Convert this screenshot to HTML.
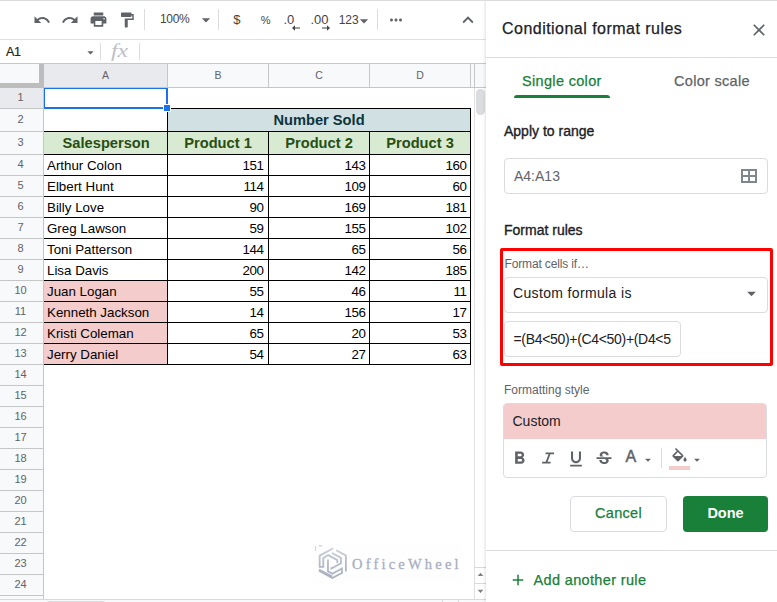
<!DOCTYPE html>
<html><head><meta charset="utf-8">
<style>
*{box-sizing:border-box;margin:0;padding:0}
html,body{width:777px;height:602px;overflow:hidden;background:#fff}
body{position:relative;font-family:"Liberation Sans",sans-serif;color:#000}
.abs{position:absolute}
svg{position:absolute;overflow:visible}
/* toolbar */
#topline{left:0;top:0;width:777px;height:1px;background:#dadce0;z-index:5}
#tbline{left:0;top:39px;width:486px;height:1px;background:#e0e0e0}
.tsep{top:9px;width:1px;height:21px;background:#dadce0}
.tt{color:#444;font-size:12px;line-height:14px;white-space:nowrap}
/* formula bar */
#fbline{left:0;top:63px;width:486px;height:1px;background:#c8c8c8}
/* grid headers */
.ch{top:64px;height:23px;background:#f8f9fa;border-right:1px solid #c4c7c5;color:#5f6368;font-size:10.5px;line-height:23px;text-align:center}
.rh{left:0;width:44px;background:#f8f9fa;border-right:1px solid #c4c7c5;border-bottom:1px solid #c4c7c5;color:#5f6368;font-size:11px;text-align:center;padding-right:2px}
.cell{font-size:13.333px;white-space:nowrap;color:#000;height:20px;line-height:20px}
.num{text-align:right;letter-spacing:-.4px}
.hd{font-weight:bold;font-size:14.667px;text-align:center;color:#274e13}
.ln{background:#000}
/* panel */
#panel{left:486px;top:0;width:291px;height:602px;background:#fff}
.box{border:1px solid #dadce0;border-radius:4px;background:#fff}
.pt{white-space:nowrap}
.pb{white-space:nowrap;color:#202124;-webkit-text-stroke:.35px #202124}
#panel{box-shadow:-1px 0 3px rgba(0,0,0,.12)}
</style></head><body>


<div class="abs" id="topline"></div><div class="abs" id="tbline"></div><div class="abs" id="fbline"></div>
<svg style="left:32.5px;top:10.7px" width="18" height="18" viewBox="0 0 24 24"><path fill="#5f6368" d="M12.5 8c-2.65 0-5.05.99-6.9 2.6L2 7v9h9l-3.62-3.62c1.39-1.16 3.16-1.88 5.12-1.88 3.54 0 6.55 2.31 7.6 5.5l2.37-.78C21.08 11.03 17.15 8 12.5 8z"/></svg>
<svg style="left:61.0px;top:10.7px" width="18" height="18" viewBox="0 0 24 24"><path fill="#5f6368" d="M18.4 10.6C16.55 8.99 14.15 8 11.5 8c-4.65 0-8.58 3.03-9.96 7.22L3.9 16c1.05-3.19 4.05-5.5 7.6-5.5 1.95 0 3.73.72 5.12 1.88L13 16h9V7l-3.6 3.6z"/></svg>
<svg style="left:88.5px;top:10.0px" width="19" height="19" viewBox="0 0 24 24"><path fill="#5f6368" d="M19 8H5c-1.66 0-3 1.34-3 3v6h4v4h12v-4h4v-6c0-1.66-1.34-3-3-3zm-3 11H8v-5h8v5zm3-7c-.55 0-1-.45-1-1s.45-1 1-1 1 .45 1 1-.45 1-1 1zm-1-9H6v4h12V3z"/></svg>
<svg style="left:118.0px;top:11.0px" width="18" height="18" viewBox="0 0 24 24"><path fill="#5f6368" d="M18 4V3c0-.55-.45-1-1-1H5c-.55 0-1 .45-1 1v4c0 .55.45 1 1 1h12c.55 0 1-.45 1-1V6h1v4H9v11c0 .55.45 1 1 1h2c.55 0 1-.45 1-1v-9h8V4h-3z"/></svg>
<div class="abs tsep" style="left:144px"></div>
<div class="abs tt" style="left:160px;top:12px;letter-spacing:-.3px">100%</div>
<svg style="left:195.7px;top:10.0px" width="20" height="20" viewBox="0 0 24 24"><path fill="#5f6368" d="M7 10l5 5 5-5z"/></svg>
<div class="abs tsep" style="left:218px"></div>
<div class="abs tt" style="left:233.3px;top:13px;font-size:13px">$</div>
<div class="abs tt" style="left:260.7px;top:13px;font-size:11px">%</div>
<div class="abs tt" style="left:283.5px;top:13px;font-size:13px">.0</div>
<svg style="left:292px;top:25px" width="8" height="6" viewBox="0 0 8 6"><path d="M0 3L3 0.3V5.7zM2 2.4H8V3.6H2z" fill="#444"/></svg>
<div class="abs tt" style="left:310.5px;top:13px;font-size:13px">.00</div>
<svg style="left:322px;top:25px" width="8" height="6" viewBox="0 0 8 6"><path d="M8 3L5 0.3V5.7zM6 2.4H0V3.6H6z" fill="#444"/></svg>
<div class="abs tt" style="left:338.7px;top:13px;font-size:12px">123</div>
<svg style="left:354.0px;top:10.5px" width="20" height="20" viewBox="0 0 24 24"><path fill="#5f6368" d="M7 10l5 5 5-5z"/></svg>
<div class="abs tsep" style="left:377px"></div>
<svg style="left:387.0px;top:11.0px" width="18" height="18" viewBox="0 0 24 24"><path fill="#5f6368" d="M6 10c-1.1 0-2 .9-2 2s.9 2 2 2 2-.9 2-2-.9-2-2-2zm12 0c-1.1 0-2 .9-2 2s.9 2 2 2 2-.9 2-2-.9-2-2-2zm-6 0c-1.1 0-2 .9-2 2s.9 2 2 2 2-.9 2-2-.9-2-2-2z"/></svg>
<svg style="left:457.0px;top:8.5px" width="22" height="22" viewBox="0 0 24 24"><path fill="#5f6368" d="M12 8l-6 6 1.41 1.41L12 10.83l4.59 4.58L18 14z"/></svg>
<div class="abs" style="left:6px;top:45px;font-size:12.5px;line-height:15px;color:#222;letter-spacing:-.4px;-webkit-text-stroke:.2px #222">A1</div>
<svg style="left:83.2px;top:44.5px" width="15" height="15" viewBox="0 0 24 24"><path fill="#5f6368" d="M7 10l5 5 5-5z"/></svg>
<div class="abs" style="left:100px;top:43px;width:1px;height:17px;background:#dadce0"></div>
<div class="abs" style="left:111px;top:40px;font-family:'Liberation Serif',serif;font-style:italic;font-size:19px;line-height:22px;color:#bdc1c6;transform:scaleX(1.25);transform-origin:0 0">fx</div>
<div class="abs" style="left:139px;top:43px;width:1px;height:17px;background:#dadce0"></div>
<div class="abs" style="left:0;top:64px;width:486px;height:24px;background:#f8f9fa;border-bottom:1px solid #c4c7c5"></div>
<div class="abs" style="left:44px;top:64px;width:123px;height:23px;background:#e8eaed"></div>
<div class="abs ch" style="left:44px;width:124px;background:#e8eaed">A</div>
<div class="abs ch" style="left:168px;width:101px">B</div>
<div class="abs ch" style="left:269px;width:101px">C</div>
<div class="abs ch" style="left:370px;width:101px">D</div>
<div class="abs" style="left:474px;top:64px;width:1px;height:23px;background:#c4c7c5"></div>
<div class="abs" style="left:0;top:64px;width:44px;height:24px;background:#f8f9fa"></div>
<div class="abs" style="left:39px;top:64px;width:5px;height:24px;background:#bdbdbd"></div>
<div class="abs" style="left:0;top:83px;width:44px;height:5px;background:#bdbdbd"></div>
<div class="abs rh" style="top:88px;height:21px;line-height:18px;background:#e8eaed">1</div>
<div class="abs rh" style="top:109px;height:23px;line-height:20px;background:#f8f9fa">2</div>
<div class="abs rh" style="top:132px;height:23px;line-height:20px;background:#f8f9fa">3</div>
<div class="abs rh" style="top:155px;height:21px;line-height:18px;background:#f8f9fa">4</div>
<div class="abs rh" style="top:176px;height:21px;line-height:18px;background:#f8f9fa">5</div>
<div class="abs rh" style="top:197px;height:21px;line-height:18px;background:#f8f9fa">6</div>
<div class="abs rh" style="top:218px;height:21px;line-height:18px;background:#f8f9fa">7</div>
<div class="abs rh" style="top:239px;height:21px;line-height:18px;background:#f8f9fa">8</div>
<div class="abs rh" style="top:260px;height:21px;line-height:18px;background:#f8f9fa">9</div>
<div class="abs rh" style="top:281px;height:21px;line-height:18px;background:#f8f9fa">10</div>
<div class="abs rh" style="top:302px;height:21px;line-height:18px;background:#f8f9fa">11</div>
<div class="abs rh" style="top:323px;height:21px;line-height:18px;background:#f8f9fa">12</div>
<div class="abs rh" style="top:344px;height:21px;line-height:18px;background:#f8f9fa">13</div>
<div class="abs rh" style="top:365px;height:21px;line-height:18px;background:#f8f9fa">14</div>
<div class="abs rh" style="top:386px;height:21px;line-height:18px;background:#f8f9fa">15</div>
<div class="abs rh" style="top:407px;height:21px;line-height:18px;background:#f8f9fa">16</div>
<div class="abs rh" style="top:428px;height:21px;line-height:18px;background:#f8f9fa">17</div>
<div class="abs rh" style="top:449px;height:21px;line-height:18px;background:#f8f9fa">18</div>
<div class="abs rh" style="top:470px;height:21px;line-height:18px;background:#f8f9fa">19</div>
<div class="abs rh" style="top:491px;height:21px;line-height:18px;background:#f8f9fa">20</div>
<div class="abs rh" style="top:512px;height:21px;line-height:18px;background:#f8f9fa">21</div>
<div class="abs rh" style="top:533px;height:21px;line-height:18px;background:#f8f9fa">22</div>
<div class="abs rh" style="top:554px;height:21px;line-height:18px;background:#f8f9fa">23</div>
<div class="abs rh" style="top:575px;height:21px;line-height:18px;background:#f8f9fa">24</div>
<div class="abs rh" style="top:596px;height:21px;line-height:18px;background:#f8f9fa">25</div>
<div class="abs" style="left:168px;top:109px;width:302px;height:22px;background:#d0e0e3"></div>
<div class="abs" style="left:44px;top:132px;width:426px;height:22px;background:#d9ead3"></div>
<div class="abs" style="left:44px;top:281px;width:123px;height:83px;background:#f4cccc"></div>
<div class="abs ln" style="left:167px;top:108px;width:304px;height:1px"></div>
<div class="abs ln" style="left:44px;top:131px;width:427px;height:1px"></div>
<div class="abs ln" style="left:44px;top:154px;width:427px;height:1px"></div>
<div class="abs ln" style="left:44px;top:175px;width:427px;height:1px"></div>
<div class="abs ln" style="left:44px;top:196px;width:427px;height:1px"></div>
<div class="abs ln" style="left:44px;top:217px;width:427px;height:1px"></div>
<div class="abs ln" style="left:44px;top:238px;width:427px;height:1px"></div>
<div class="abs ln" style="left:44px;top:259px;width:427px;height:1px"></div>
<div class="abs ln" style="left:44px;top:280px;width:427px;height:1px"></div>
<div class="abs ln" style="left:44px;top:301px;width:427px;height:1px"></div>
<div class="abs ln" style="left:44px;top:322px;width:427px;height:1px"></div>
<div class="abs ln" style="left:44px;top:343px;width:427px;height:1px"></div>
<div class="abs ln" style="left:44px;top:364px;width:427px;height:1px"></div>
<div class="abs ln" style="left:167px;top:108px;width:1px;height:257px"></div>
<div class="abs ln" style="left:470px;top:108px;width:1px;height:257px"></div>
<div class="abs ln" style="left:268px;top:131px;width:1px;height:234px"></div>
<div class="abs ln" style="left:369px;top:131px;width:1px;height:234px"></div>
<div class="abs cell hd" style="left:168px;top:109px;width:302px;height:22px;line-height:22px;color:#0c343d">Number Sold</div>
<div class="abs cell hd" style="left:44.7px;top:132px;width:123px;height:22px;line-height:22px">Salesperson</div>
<div class="abs cell hd" style="left:168px;top:132px;width:100px;height:22px;line-height:22px">Product 1</div>
<div class="abs cell hd" style="left:269px;top:132px;width:100px;height:22px;line-height:22px">Product 2</div>
<div class="abs cell hd" style="left:370px;top:132px;width:100px;height:22px;line-height:22px">Product 3</div>
<div class="abs cell" style="left:47px;top:156px">Arthur Colon</div>
<div class="abs cell num" style="left:168px;top:156px;width:95.6px">151</div>
<div class="abs cell num" style="left:269px;top:156px;width:96.5px">143</div>
<div class="abs cell num" style="left:370px;top:156px;width:96.5px">160</div>
<div class="abs cell" style="left:47px;top:177px">Elbert Hunt</div>
<div class="abs cell num" style="left:168px;top:177px;width:95.6px">114</div>
<div class="abs cell num" style="left:269px;top:177px;width:96.5px">109</div>
<div class="abs cell num" style="left:370px;top:177px;width:96.5px">60</div>
<div class="abs cell" style="left:47px;top:198px">Billy Love</div>
<div class="abs cell num" style="left:168px;top:198px;width:95.6px">90</div>
<div class="abs cell num" style="left:269px;top:198px;width:96.5px">169</div>
<div class="abs cell num" style="left:370px;top:198px;width:96.5px">181</div>
<div class="abs cell" style="left:47px;top:219px">Greg Lawson</div>
<div class="abs cell num" style="left:168px;top:219px;width:95.6px">59</div>
<div class="abs cell num" style="left:269px;top:219px;width:96.5px">155</div>
<div class="abs cell num" style="left:370px;top:219px;width:96.5px">102</div>
<div class="abs cell" style="left:47px;top:240px">Toni Patterson</div>
<div class="abs cell num" style="left:168px;top:240px;width:95.6px">144</div>
<div class="abs cell num" style="left:269px;top:240px;width:96.5px">65</div>
<div class="abs cell num" style="left:370px;top:240px;width:96.5px">56</div>
<div class="abs cell" style="left:47px;top:261px">Lisa Davis</div>
<div class="abs cell num" style="left:168px;top:261px;width:95.6px">200</div>
<div class="abs cell num" style="left:269px;top:261px;width:96.5px">142</div>
<div class="abs cell num" style="left:370px;top:261px;width:96.5px">185</div>
<div class="abs cell" style="left:47px;top:282px">Juan Logan</div>
<div class="abs cell num" style="left:168px;top:282px;width:95.6px">55</div>
<div class="abs cell num" style="left:269px;top:282px;width:96.5px">46</div>
<div class="abs cell num" style="left:370px;top:282px;width:96.5px">11</div>
<div class="abs cell" style="left:47px;top:303px">Kenneth Jackson</div>
<div class="abs cell num" style="left:168px;top:303px;width:95.6px">14</div>
<div class="abs cell num" style="left:269px;top:303px;width:96.5px">156</div>
<div class="abs cell num" style="left:370px;top:303px;width:96.5px">17</div>
<div class="abs cell" style="left:47px;top:324px">Kristi Coleman</div>
<div class="abs cell num" style="left:168px;top:324px;width:95.6px">65</div>
<div class="abs cell num" style="left:269px;top:324px;width:96.5px">20</div>
<div class="abs cell num" style="left:370px;top:324px;width:96.5px">53</div>
<div class="abs cell" style="left:47px;top:345px">Jerry Daniel</div>
<div class="abs cell num" style="left:168px;top:345px;width:95.6px">54</div>
<div class="abs cell num" style="left:269px;top:345px;width:96.5px">27</div>
<div class="abs cell num" style="left:370px;top:345px;width:96.5px">63</div>
<div class="abs" style="left:44px;top:88px;width:124px;height:21px;border:solid #1a73e8;border-width:1px 2px 2px 1px"></div>
<div class="abs" style="left:163px;top:104px;width:8px;height:8px;background:#1a73e8;border:1px solid #fff"></div>
<svg style="left:0;top:0" width="777" height="602" viewBox="0 0 777 602"><defs><linearGradient id="wg" gradientUnits="userSpaceOnUse" x1="0" y1="547" x2="0" y2="579"><stop offset="0" stop-color="#cdd1da"/><stop offset=".45" stop-color="#b6bcc9"/><stop offset="1" stop-color="#a9afbf"/></linearGradient></defs>
<rect x="313" y="544" width="149" height="38" fill="#fefefe"/>
<polyline points="333.27,548.32 319.65,555.62 319.65,566.92 323.30,566.92 323.30,557.95 328.29,555.09 337.26,559.94 337.26,562.93" fill="none" stroke="url(#wg)" stroke-width="1.8" stroke-linejoin="miter"/>
<polyline points="336.26,550.31 345.89,555.49 345.89,571.57" fill="none" stroke="url(#wg)" stroke-width="1.8" stroke-linejoin="miter"/>
<polyline points="331.94,552.97 340.91,557.75 340.91,563.27 331.41,568.58 331.41,567.25" fill="none" stroke="url(#wg)" stroke-width="1.8" stroke-linejoin="miter"/>
<polyline points="327.95,559.61 327.95,571.24 332.27,573.70 341.91,568.58 341.91,573.03 332.27,578.08 318.98,570.77" fill="none" stroke="url(#wg)" stroke-width="1.8" stroke-linejoin="miter"/>
<polyline points="318.98,569.58 332.27,576.55" fill="none" stroke="url(#wg)" stroke-width="1.8" stroke-linejoin="miter"/>
<rect x="315" y="546" width="1" height="5" fill="#d0d3da"/><rect x="319" y="545" width="3" height="1.5" fill="#d0d3da"/>
</svg>
<div class="abs" id="wm" style="left:352px;top:554px;font-family:'Liberation Serif',serif;font-size:14.5px;line-height:20px;letter-spacing:3.2px;color:#a9afbf;white-space:nowrap;-webkit-text-stroke:.3px #a9afbf">OfficeWheel</div>
<div class="abs" style="left:474px;top:88px;width:12px;height:514px;background:#fff;border-left:1px solid #e0e0e0"></div>
<div class="abs" style="left:476px;top:89px;width:9px;height:26px;background:#dadce0;border-radius:5px"></div>
<div class="abs" style="left:0;top:599px;width:486px;height:3px;background:#f8f9fa;border-top:1px solid #d9d9d9"></div>
<div class="abs" style="left:442px;top:600px;width:1px;height:2px;background:#d9d9d9"></div><div class="abs" style="left:458px;top:600px;width:1px;height:2px;background:#d9d9d9"></div>
<div class="abs" style="left:475px;top:567px;width:11px;height:1px;background:#d9d9d9"></div><div class="abs" style="left:475px;top:583px;width:11px;height:1px;background:#d9d9d9"></div>
<svg style="left:475px;top:568px" width="11" height="31" viewBox="0 0 11 31"><path d="M2.7 8L5.5 4.7 8.3 8zM2.7 21.8L5.5 25.1 8.3 21.8z" fill="#808080"/></svg>
<div class="abs" style="left:47px;top:600.5px;width:58px;height:4px;background:#dadce0;border-radius:2px"></div>
<div class="abs" id="panel"></div>
<div class="abs" style="left:486px;top:57px;width:291px;height:1px;background:#dadce0"></div>
<div class="abs pt" style="left:502px;top:19px;font-size:16px;line-height:20px;color:#202124;letter-spacing:.47px;-webkit-text-stroke:.25px #202124" id="ttl">Conditional format rules</div>
<svg style="left:749.0px;top:19.5px" width="20" height="20" viewBox="0 0 24 24"><path fill="#5f6368" d="M19 6.41L17.59 5 12 10.59 6.41 5 5 6.41 10.59 12 5 17.59 6.41 19 12 13.41 17.59 19 19 17.59 13.41 12z"/></svg>
<div class="abs pt" style="left:522px;top:72px;font-size:14.5px;line-height:18px;color:#188038;letter-spacing:.33px;-webkit-text-stroke:.25px #188038" id="tab1">Single color</div>
<div class="abs" style="left:514px;top:95px;width:96px;height:3px;background:#188038;border-radius:3px 3px 0 0"></div>
<div class="abs pt" style="left:674px;top:72px;font-size:14.5px;line-height:18px;color:#5f6368;letter-spacing:.3px;-webkit-text-stroke:.25px #5f6368" id="tab2">Color scale</div>
<div class="abs pb" style="left:504px;top:122px;font-size:14px;line-height:18px" id="atr">Apply to range</div>
<div class="abs box" style="left:504px;top:158px;width:264px;height:36px"></div>
<div class="abs" style="left:514px;top:167px;font-size:14px;line-height:18px;color:#5f6368" id="rng">A4:A13</div>
<svg style="left:741px;top:169px" width="16" height="14" viewBox="0 0 16 14"><path d="M1 1h14v12H1zM8 1v12M1 7h14" fill="none" stroke="#80868b" stroke-width="2"/></svg>
<div class="abs pb" style="left:504px;top:221px;font-size:14px;line-height:18px" id="fr">Format rules</div>
<div class="abs" style="left:500px;top:248px;width:273px;height:118px;border:3px solid #f00;border-radius:2px"></div>
<div class="abs" style="left:504.5px;top:257px;font-size:12px;line-height:14px;color:#5f6368;letter-spacing:-.15px" id="fci">Format cells if…</div>
<div class="abs box" style="left:504px;top:277px;width:264px;height:36px"></div>
<div class="abs" style="left:513px;top:284px;font-size:14px;line-height:18px;color:#202124;letter-spacing:.35px" id="cfi">Custom formula is</div>
<svg style="left:741.0px;top:283.0px" width="21" height="21" viewBox="0 0 24 24"><path fill="#5f6368" d="M7 10l5 5 5-5z"/></svg>
<div class="abs box" style="left:504px;top:321px;width:177px;height:36px"></div>
<div class="abs" style="left:513.5px;top:330px;font-size:14px;line-height:18px;color:#202124;letter-spacing:-.32px" id="fml">=(B4&lt;50)+(C4&lt;50)+(D4&lt;5</div>
<div class="abs" style="left:504px;top:383px;font-size:12px;line-height:14px;color:#5f6368" id="fs">Formatting style</div>
<div class="abs box" style="left:503px;top:403px;width:264px;height:75px;overflow:hidden"><div style="height:35px;background:#f4cccc"></div></div>
<div class="abs" style="left:512.5px;top:412px;font-size:14px;line-height:18px;color:#202124" id="cus">Custom</div>
<svg style="left:509.0px;top:447.5px" width="21" height="21" viewBox="0 0 24 24"><path fill="#5f6368" d="M15.6 10.79c.97-.67 1.65-1.77 1.65-2.79 0-2.26-1.75-4-4-4H7v14h7.04c2.09 0 3.71-1.7 3.71-3.79 0-1.52-.86-2.82-2.15-3.42zM10 6.5h3c.83 0 1.5.67 1.5 1.5s-.67 1.5-1.5 1.5h-3v-3zm3.5 9H10v-3h3.5c.83 0 1.5.67 1.5 1.5s-.67 1.5-1.5 1.5z"/></svg>
<svg style="left:0;top:0" width="777" height="602" viewBox="0 0 777 602"><path d="M545.6 453.3H554.1M542.1 462.6H550.6M549.9 453.3L546.3 462.6" fill="none" stroke="#5f6368" stroke-width="1.8"/></svg>
<svg style="left:566.0px;top:448.5px" width="20" height="20" viewBox="0 0 24 24"><path fill="#5f6368" d="M12 17c3.31 0 6-2.69 6-6V3h-2.5v8c0 1.93-1.57 3.5-3.5 3.5S8.5 12.93 8.5 11V3H6v8c0 3.31 2.69 6 6 6zm-7 2v2h14v-2H5z"/></svg>
<svg style="left:593.7px;top:449.0px" width="20" height="20" viewBox="0 0 24 24"><path fill="#5f6368" d="M7.24 8.75c-.26-.48-.39-1.03-.39-1.67 0-.61.13-1.16.4-1.67.26-.5.63-.93 1.11-1.29.48-.35 1.05-.63 1.7-.83.66-.19 1.39-.29 2.18-.29.81 0 1.54.11 2.21.34.66.22 1.23.54 1.69.94.47.4.83.88 1.08 1.43.25.55.38 1.15.38 1.81h-3.01c0-.31-.05-.59-.15-.85-.09-.27-.24-.49-.44-.68-.2-.19-.45-.33-.75-.44-.3-.1-.66-.16-1.06-.16-.39 0-.74.04-1.03.13-.29.09-.53.21-.72.36-.19.16-.34.34-.44.55-.1.21-.15.43-.15.66 0 .48.25.88.74 1.21.38.25.77.48 1.41.7H7.39c-.05-.08-.11-.17-.15-.25zM21 12v-2H3v2h9.62c.18.07.4.14.55.2.37.17.66.34.87.51.21.17.35.36.43.57.07.2.11.43.11.69 0 .23-.05.45-.14.66-.09.2-.23.38-.42.53-.19.15-.42.26-.71.35-.29.08-.63.13-1.01.13-.43 0-.83-.04-1.18-.13s-.66-.23-.91-.42c-.25-.19-.45-.44-.59-.75-.14-.31-.25-.76-.25-1.21H6.4c0 .55.08 1.13.24 1.58.16.45.37.85.65 1.21.28.35.6.66.98.92.37.26.78.48 1.22.65.44.17.9.3 1.38.39.48.08.96.13 1.44.13.8 0 1.53-.09 2.18-.28s1.21-.45 1.67-.79c.46-.34.82-.77 1.07-1.27.25-.5.38-1.07.38-1.71 0-.6-.1-1.14-.31-1.61-.05-.11-.11-.23-.17-.33H21z"/></svg>
<div class="abs" style="left:625.5px;top:447px;font-size:16px;line-height:20px;color:#5f6368;-webkit-text-stroke:.5px #5f6368" id="bigA">A</div>
<svg style="left:641.3px;top:453.3px" width="14" height="14" viewBox="0 0 24 24"><path fill="#5f6368" d="M7 10l5 5 5-5z"/></svg>
<div class="abs" style="left:661px;top:448px;width:1px;height:20px;background:#dadce0"></div>
<svg style="left:669.8px;top:447.8px" width="19" height="19" viewBox="0 0 24 24"><path fill="#5f6368" d="M16.56 8.94L7.62 0 6.21 1.41l2.38 2.38-5.15 5.15c-.59.59-.59 1.54 0 2.12l5.5 5.5c.29.29.68.44 1.06.44s.77-.15 1.06-.44l5.5-5.5c.59-.58.59-1.53 0-2.12zM5.21 10L10 5.21 14.79 10H5.21zM19 11.5s-2 2.17-2 3.5c0 1.1.9 2 2 2s2-.9 2-2c0-1.33-2-3.5-2-3.5z"/></svg>
<div class="abs" style="left:669px;top:466px;width:21px;height:4px;background:#f4cccc"></div>
<svg style="left:689.7px;top:453.3px" width="14" height="14" viewBox="0 0 24 24"><path fill="#5f6368" d="M7 10l5 5 5-5z"/></svg>
<div class="abs box pt" style="left:570px;top:496px;width:97px;height:36px;color:#188038;font-size:14.5px;line-height:33px;text-align:center;letter-spacing:.3px;-webkit-text-stroke:.25px #188038" id="cancel">Cancel</div>
<div class="abs pt" style="left:683px;top:496px;width:85px;height:36px;border-radius:4px;background:#188038;color:#fff;font-weight:bold;font-size:14.5px;line-height:35px;text-align:center" id="done">Done</div>
<div class="abs" style="left:486px;top:550px;width:291px;height:1px;background:#dadce0"></div>
<svg style="left:508.5px;top:570.5px" width="18" height="18" viewBox="0 0 24 24"><path fill="#188038" d="M19 13h-6v6h-2v-6H5v-2h6V5h2v6h6v2z"/></svg>
<div class="abs pt" style="left:533.5px;top:571px;font-size:14.5px;line-height:18px;color:#188038;letter-spacing:.35px;-webkit-text-stroke:.25px #188038" id="aar">Add another rule</div>
</body></html>
